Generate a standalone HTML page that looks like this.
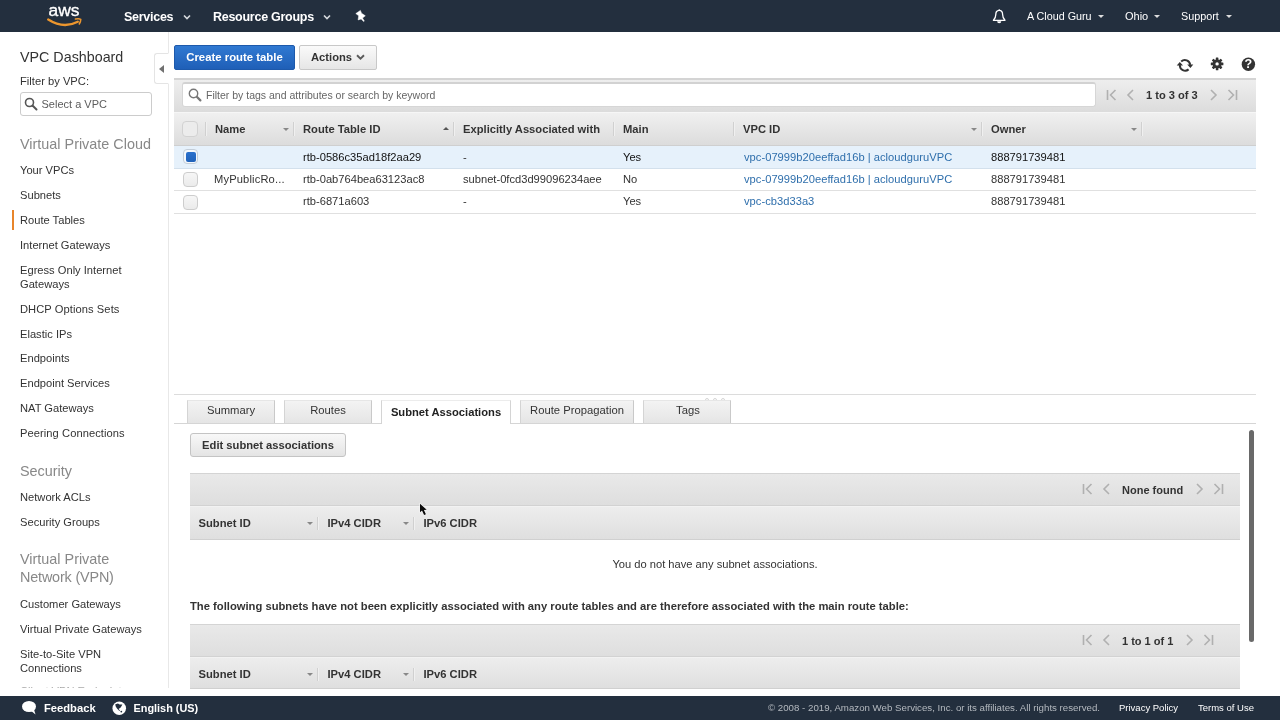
<!DOCTYPE html>
<html lang="en">
<head>
<meta charset="utf-8">
<title>Route Tables | VPC Management Console</title>
<style>
*{box-sizing:border-box;margin:0;padding:0}
html,body{width:1280px;height:720px;overflow:hidden;background:#fff;font-family:"Liberation Sans",Arial,sans-serif;color:#333;font-size:12px}
.abs{position:absolute}
#hdr{position:absolute;left:0;top:0;width:1280px;height:32px;background:#232f3e;color:#fff}
#hdr .t{position:absolute;top:9px;font-size:12.5px;letter-spacing:-0.27px;font-weight:bold;line-height:16px;white-space:nowrap}
#hdr .r{position:absolute;top:9px;font-size:11px;line-height:14px;white-space:nowrap;color:#fff}
#ftr{position:absolute;left:0;top:696px;width:1280px;height:24px;background:#232f3e;color:#fff}
#ftr span{position:absolute;white-space:nowrap}
#side{position:absolute;left:0;top:32px;width:169px;height:656px;background:#fff;border-right:1px solid #e8e8e8;overflow:hidden}
#side .h1{position:absolute;left:20px;font-size:14.3px;color:#333;line-height:18px;white-space:nowrap}
#side .h2{position:absolute;left:20px;font-size:14.4px;color:#888;line-height:18px}
#side .l{position:absolute;left:20px;font-size:11.15px;color:#333;line-height:14px;width:130px}
#main{position:absolute;left:169px;top:32px;width:1111px;height:664px;background:#fff;overflow:hidden}
.btn{position:absolute;height:25px;border-radius:2px;font-size:11.2px;font-weight:bold;line-height:23px;text-align:center;white-space:nowrap}
.bar{position:absolute;background:linear-gradient(#ededed,#e0e0e0);}
.th{position:absolute;font-weight:bold;font-size:11.2px;color:#333;white-space:nowrap;line-height:14px}
.td{position:absolute;font-size:11.15px;color:#333;white-space:nowrap;line-height:14px}
.lnk{color:#2f6fac;letter-spacing:0.03px}
.cb{position:absolute;width:15px;height:15px;border:1px solid #cdcdcd;border-radius:4px;background:linear-gradient(#f6f6f6,#ebebeb)}
.sep{position:absolute;width:1px;background:#d0d0d0;box-shadow:1px 0 0 #f0f0f0}
.tri{position:absolute;width:0;height:0;border-left:3px solid transparent;border-right:3px solid transparent;border-top:3px solid #888}
.tab{position:absolute;top:400px;height:23px;border:1px solid #d4d4d4;border-top-color:#e6e6e6;border-right-color:#c9c9c9;border-bottom:none;background:linear-gradient(#f3f3f3,#e5e5e5);font-size:11.25px;line-height:19px;text-align:center;color:#333}
.pg{position:absolute;font-size:11px;font-weight:bold;color:#333;white-space:nowrap;line-height:14px}
</style>
</head>
<body>
<div id="root" style="position:absolute;left:0;top:0;width:1280px;height:720px;overflow:hidden;will-change:transform">
<div id="hdr">
  <svg class="abs" style="left:44px;top:2px" width="44" height="28" viewBox="0 0 44 28">
    <text x="4.6" y="14.2" font-family="Liberation Sans, sans-serif" font-size="17.4" fill="#fff" textLength="31" lengthAdjust="spacingAndGlyphs" stroke="#fff" stroke-width="0.35">aws</text>
    <path d="M4.2 17.5 Q19.5 27.2 33.8 19.7" fill="none" stroke="#ec962e" stroke-width="2.3" stroke-linecap="round"/>
    <path d="M31.4 17 Q35 16.2 36.8 17.3 Q36.8 19.6 35.3 22" fill="none" stroke="#ec962e" stroke-width="1.5" stroke-linecap="round" stroke-linejoin="round"/>
  </svg>
  <span class="t" style="left:124px">Services</span>
  <svg class="abs" style="left:183px;top:14px" width="8" height="7" viewBox="0 0 8 7"><path d="M1 1.5 L4 4.6 L7 1.5" fill="none" stroke="#d5d9dd" stroke-width="1.6"/></svg>
  <span class="t" style="left:213px">Resource Groups</span>
  <svg class="abs" style="left:323px;top:14px" width="8" height="7" viewBox="0 0 8 7"><path d="M1 1.5 L4 4.6 L7 1.5" fill="none" stroke="#d5d9dd" stroke-width="1.6"/></svg>
  <svg class="abs" style="left:345px;top:4px" width="30" height="24" viewBox="0 0 30 24"><path d="M10.8 9.6 L15.4 6.4 L16.5 9.2 L20.3 11.8 L17.5 14.1 L19.3 17.1 L18.6 17.5 L16.2 15 L13.1 15.9 L13.7 11.7 Z" fill="#fff" stroke="#fff" stroke-width="0.5" stroke-linejoin="round"/></svg>
  <svg class="abs" style="left:984px;top:4px" width="30" height="24" viewBox="0 0 30 24"><path d="M15.2 6.3 C12.4 6.3 11.8 8.6 11.8 10.6 C11.8 13.6 10.8 15 9.4 16.3 L21 16.3 C19.6 15 18.6 13.6 18.6 10.6 C18.6 8.6 18 6.3 15.2 6.3 Z" fill="none" stroke="#fff" stroke-width="1.3" stroke-linejoin="round"/><path d="M13.1 17.2 A2.1 2.1 0 0 0 17.3 17.2 Z" fill="#fff"/><circle cx="15.2" cy="6" r="0.8" fill="#fff"/></svg>
  <span class="r" style="left:1027px;font-size:10.75px">A Cloud Guru</span>
  <div class="tri" style="left:1098px;top:15px;border-top-color:#ddd"></div>
  <span class="r" style="left:1125px">Ohio</span>
  <div class="tri" style="left:1154px;top:15px;border-top-color:#ddd"></div>
  <span class="r" style="left:1181px;font-size:10.8px">Support</span>
  <div class="tri" style="left:1226px;top:15px;border-top-color:#ddd"></div>
</div>

<div id="side">
  <div class="h1" style="top:16px">VPC Dashboard</div>
  <div class="l" style="top:42px;font-size:11.2px">Filter by VPC:</div>
  <div class="abs" style="left:20px;top:60px;width:132px;height:24px;border:1px solid #ccc;border-radius:3px;background:#fff"></div>
  <svg class="abs" style="left:24px;top:65px" width="14" height="14" viewBox="0 0 14 14"><circle cx="5.5" cy="5.5" r="4" fill="none" stroke="#555" stroke-width="1.6"/><path d="M8.5 8.5 L12.5 12.5" stroke="#555" stroke-width="2" stroke-linecap="round"/></svg>
  <div class="l" style="left:41.5px;top:65px;font-size:11px;color:#5c5c5c">Select a VPC</div>
  <div class="h2" style="top:103px">Virtual Private Cloud</div>
  <div class="l" style="top:131px">Your VPCs</div>
  <div class="l" style="top:156px">Subnets</div>
  <div class="abs" style="left:12px;top:178px;width:2px;height:20px;background:#e8852b"></div>
  <div class="l" style="top:181px">Route Tables</div>
  <div class="l" style="top:206px">Internet Gateways</div>
  <div class="l" style="top:231px">Egress Only Internet Gateways</div>
  <div class="l" style="top:270px;letter-spacing:0.07px">DHCP Options Sets</div>
  <div class="l" style="top:295px">Elastic IPs</div>
  <div class="l" style="top:319px">Endpoints</div>
  <div class="l" style="top:344px">Endpoint Services</div>
  <div class="l" style="top:369px">NAT Gateways</div>
  <div class="l" style="top:394px;letter-spacing:0.07px">Peering Connections</div>
  <div class="h2" style="top:430px">Security</div>
  <div class="l" style="top:458px">Network ACLs</div>
  <div class="l" style="top:483px">Security Groups</div>
  <div class="h2" style="top:518px;width:120px">Virtual Private <span style="letter-spacing:-0.17px">Network (VPN)</span></div>
  <div class="l" style="top:565px">Customer Gateways</div>
  <div class="l" style="top:590px">Virtual Private Gateways</div>
  <div class="l" style="top:615px;width:110px">Site-to-Site VPN Connections</div>
  <div class="l" style="top:652px;color:#aaa">Client VPN Endpoints</div>
</div>
<!-- collapse handle -->
<div class="abs" style="left:154px;top:53px;width:15px;height:31px;background:#fff;border:1px solid #e4e4e4;border-right:1px solid #fff;border-radius:3px 0 0 3px"></div>
<div class="abs" style="left:159px;top:65px;width:0;height:0;border-top:4.5px solid transparent;border-bottom:4.5px solid transparent;border-right:5px solid #707070"></div>

<div id="main">
  <!-- coordinates inside #main are page coords minus (169,32) -->
  <div class="btn" style="left:5px;top:13px;width:121px;font-size:11.35px;background:linear-gradient(#3079d2,#1f5fb7);border:1px solid #1d59ab;color:#fff">Create route table</div>
  <div class="btn" style="left:130px;top:13px;width:78px;background:linear-gradient(#fafafa,#e6e6e6);border:1px solid #c8c8c8;color:#333;text-align:left;padding-left:11px">Actions</div>
  <svg class="abs" style="left:187px;top:22px" width="9" height="7" viewBox="0 0 9 7"><path d="M1 1.2 L4.5 4.6 L8 1.2" fill="none" stroke="#5a5a5a" stroke-width="1.9"/></svg>

  <!-- right icons -->
  <svg class="abs" style="left:1007px;top:26px" width="18" height="14" viewBox="0 0 18 14"><g fill="none" stroke="#333" stroke-width="2"><path d="M5.2 3.4 A5.4 5.4 0 0 1 14.2 6.8"/><path d="M3.8 7.1 A5.4 5.4 0 0 0 12.6 11.4"/></g><path d="M11.2 6.5 L17.3 6.5 L14.4 10.1 Z M0.7 7.4 L7 7.4 L3.8 3.9 Z" fill="#333"/></svg>
  <svg class="abs" style="left:1041px;top:25px" width="14" height="14" viewBox="0 0 14 14"><g fill="#333" transform="translate(7.1 6.9)"><circle r="4.5"/><rect x="-1.3" y="-6.3" width="2.6" height="12.6" rx="0.5"/><rect x="-1.3" y="-6.3" width="2.6" height="12.6" rx="0.5" transform="rotate(45)"/><rect x="-1.3" y="-6.3" width="2.6" height="12.6" rx="0.5" transform="rotate(90)"/><rect x="-1.3" y="-6.3" width="2.6" height="12.6" rx="0.5" transform="rotate(135)"/><circle r="1.7" fill="#fff"/></g></svg>
  <svg class="abs" style="left:1072px;top:25px" width="15" height="15" viewBox="0 0 15 15"><circle cx="7.4" cy="7.3" r="6.7" fill="#333"/><text x="7.4" y="11.4" text-anchor="middle" font-family="Liberation Sans, sans-serif" font-weight="bold" font-size="12.5" fill="#fff">?</text></svg>

  <!-- filter bar -->
  <div class="bar" style="left:5px;top:46px;width:1082px;height:34px;background:linear-gradient(#eeeeee,#dcdcdc);border-top:2px solid #d4d4d4"></div>
  <div class="abs" style="left:13px;top:50px;width:914px;height:25px;background:#fff;border:1px solid #d6d6d6;border-top:2px solid #d2d2d2;border-radius:3px"></div>
  <svg class="abs" style="left:19px;top:56px" width="14" height="14" viewBox="0 0 14 14"><circle cx="5.5" cy="5.5" r="4.2" fill="none" stroke="#777" stroke-width="1.4"/><path d="M8.8 8.8 L12.4 12.4" stroke="#777" stroke-width="2.2" stroke-linecap="round"/></svg>
  <div class="td" style="left:37px;top:56px;color:#666;font-size:10.5px">Filter by tags and attributes or search by keyword</div>
  <svg class="abs" style="left:936.6px;top:57px" width="12" height="12" viewBox="0 0 12 12"><path d="M1.5 1 V11 M9.5 1 L4.5 6 L9.5 11" fill="none" stroke="#b0b0b0" stroke-width="1.6"/></svg>
  <svg class="abs" style="left:957px;top:57px" width="9" height="12" viewBox="0 0 9 12"><path d="M7 1 L2 6 L7 11" fill="none" stroke="#b0b0b0" stroke-width="1.6"/></svg>
  <div class="pg" style="left:977px;top:56px;font-size:11.1px">1 to 3 of 3</div>
  <svg class="abs" style="left:1040.3px;top:57px" width="9" height="12" viewBox="0 0 9 12"><path d="M2 1 L7 6 L2 11" fill="none" stroke="#b0b0b0" stroke-width="1.6"/></svg>
  <svg class="abs" style="left:1057.2px;top:57px" width="12" height="12" viewBox="0 0 12 12"><path d="M10.5 1 V11 M2.5 1 L7.5 6 L2.5 11" fill="none" stroke="#b0b0b0" stroke-width="1.6"/></svg>

  <!-- table header -->
  <div class="bar" style="left:5px;top:80px;width:1082px;height:34px;background:linear-gradient(#f0f0f0,#dcdcdc);border-top:1px solid #f6f6f6;border-bottom:1px solid #cfcfcf"></div>
  <div class="cb" style="left:13px;top:89px;width:16px;height:16px;background:#ececec;border-color:#d2d2d2"></div>
  <div class="sep" style="left:36px;top:90px;height:14px"></div>
  <div class="th" style="left:46px;top:90px">Name</div>
  <div class="tri" style="left:114px;top:96px"></div>
  <div class="sep" style="left:124px;top:90px;height:14px"></div>
  <div class="th" style="left:134px;top:90px">Route Table ID</div>
  <div class="tri" style="left:274px;top:95px;border-top:none;border-bottom:3px solid #555"></div>
  <div class="sep" style="left:284px;top:90px;height:14px"></div>
  <div class="th" style="left:294px;top:90px">Explicitly Associated with</div>
  <div class="sep" style="left:444px;top:90px;height:14px"></div>
  <div class="th" style="left:454px;top:90px">Main</div>
  <div class="sep" style="left:564px;top:90px;height:14px"></div>
  <div class="th" style="left:574px;top:90px">VPC ID</div>
  <div class="tri" style="left:802px;top:96px"></div>
  <div class="sep" style="left:812px;top:90px;height:14px"></div>
  <div class="th" style="left:822px;top:90px">Owner</div>
  <div class="tri" style="left:962px;top:96px"></div>
  <div class="sep" style="left:972px;top:90px;height:14px"></div>

  <!-- rows -->
  <div class="abs" style="left:5px;top:114px;width:1082px;height:23px;background:#e6f1fb;border-bottom:1px solid #d3e0ec"></div>
  <div class="abs" style="left:5px;top:137px;width:1082px;height:22px;border-bottom:1px solid #e0e0e0"></div>
  <div class="abs" style="left:5px;top:159px;width:1082px;height:23px;border-bottom:1px solid #e0e0e0"></div>

  <div class="cb" style="left:14px;top:117px;background:#f4f8fc;border-color:#c3cdd8"></div>
  <div class="abs" style="left:17px;top:120px;width:10px;height:10px;background:linear-gradient(#2a70cc,#2062ba);border-radius:2px"></div>
  <div class="td" style="left:134px;top:118px;color:#111">rtb-0586c35ad18f2aa29</div>
  <div class="td" style="left:294px;top:118px">-</div>
  <div class="td" style="left:454px;top:118px;color:#111">Yes</div>
  <div class="td lnk" style="left:575px;top:118px">vpc-07999b20eeffad16b | acloudguruVPC</div>
  <div class="td" style="left:822px;top:118px;color:#111">888791739481</div>

  <div class="cb" style="left:14px;top:140px"></div>
  <div class="td" style="left:45px;top:140px;letter-spacing:0.15px">MyPublicRo...</div>
  <div class="td" style="left:134px;top:140px">rtb-0ab764bea63123ac8</div>
  <div class="td" style="left:294px;top:140px">subnet-0fcd3d99096234aee</div>
  <div class="td" style="left:454px;top:140px">No</div>
  <div class="td lnk" style="left:575px;top:140px">vpc-07999b20eeffad16b | acloudguruVPC</div>
  <div class="td" style="left:822px;top:140px">888791739481</div>

  <div class="cb" style="left:14px;top:163px"></div>
  <div class="td" style="left:134px;top:162px">rtb-6871a603</div>
  <div class="td" style="left:294px;top:162px">-</div>
  <div class="td" style="left:454px;top:162px">Yes</div>
  <div class="td lnk" style="left:575px;top:162px">vpc-cb3d33a3</div>
  <div class="td" style="left:822px;top:162px">888791739481</div>

  <!-- splitter -->
  <div class="abs" style="left:5px;top:362px;width:1082px;height:1px;background:#dcdcdc"></div>
  <div class="abs" style="left:536px;top:366px;width:4px;height:4px;border:1px solid #d4d4d4;border-radius:2px"></div><div class="abs" style="left:544px;top:366px;width:4px;height:4px;border:1px solid #d4d4d4;border-radius:2px"></div><div class="abs" style="left:552px;top:366px;width:4px;height:4px;border:1px solid #d4d4d4;border-radius:2px"></div>

  <!-- tabs (page y 400-423) -->
  <div class="abs" style="left:5px;top:391px;width:1082px;height:1px;background:#d5d5d5"></div>
  <div class="tab" style="left:18px;top:368px;width:88px">Summary</div>
  <div class="tab" style="left:115px;top:368px;width:88px">Routes</div>
  <div class="tab" style="left:212px;top:368px;width:130px;height:24px;background:#fff;font-weight:bold;font-size:11.2px;line-height:23px;color:#222;border-color:#d4d4d4;border-top-color:#ececec">Subnet Associations</div>
  <div class="tab" style="left:351px;top:368px;width:114px">Route Propagation</div>
  <div class="tab" style="left:474px;top:368px;width:88px;padding-left:2px">Tags</div>

  <!-- edit button -->
  <div class="btn" style="left:21px;top:401px;width:156px;height:24px;line-height:22px;background:linear-gradient(#f8f8f8,#e4e4e4);border:1px solid #c4c4c4;color:#333;border-radius:3px">Edit subnet associations</div>

  <!-- inner table 1 -->
  <div class="bar" style="left:21px;top:441px;width:1050px;height:33px;background:linear-gradient(#e9e9e9,#dedede);border-top:1px solid #d4d4d4;border-bottom:1px solid #d2d2d2"></div>
  <svg class="abs" style="left:913px;top:451px" width="12" height="12" viewBox="0 0 12 12"><path d="M1.5 1 V11 M9.5 1 L4.5 6 L9.5 11" fill="none" stroke="#b0b0b0" stroke-width="1.6"/></svg>
  <svg class="abs" style="left:933px;top:451px" width="9" height="12" viewBox="0 0 9 12"><path d="M7 1 L2 6 L7 11" fill="none" stroke="#b0b0b0" stroke-width="1.6"/></svg>
  <div class="pg" style="left:953px;top:451px">None found</div>
  <svg class="abs" style="left:1026px;top:451px" width="9" height="12" viewBox="0 0 9 12"><path d="M2 1 L7 6 L2 11" fill="none" stroke="#b0b0b0" stroke-width="1.6"/></svg>
  <svg class="abs" style="left:1042.5px;top:451px" width="12" height="12" viewBox="0 0 12 12"><path d="M10.5 1 V11 M2.5 1 L7.5 6 L2.5 11" fill="none" stroke="#b0b0b0" stroke-width="1.6"/></svg>
  <div class="bar" style="left:21px;top:474px;width:1050px;height:34px;background:linear-gradient(#ededed,#dfdfdf);border-top:1px solid #f2f2f2;border-bottom:1px solid #d0d0d0"></div>
  <div class="th" style="left:29.5px;top:484px">Subnet ID</div>
  <div class="tri" style="left:138px;top:490px"></div>
  <div class="sep" style="left:148px;top:485px;height:13px"></div>
  <div class="th" style="left:158.5px;top:484px">IPv4 CIDR</div>
  <div class="tri" style="left:234px;top:490px"></div>
  <div class="sep" style="left:244px;top:485px;height:13px"></div>
  <div class="th" style="left:254.5px;top:484px">IPv6 CIDR</div>

  <div class="td" style="left:21px;width:1050px;text-align:center;top:525px">You do not have any subnet associations.</div>
  <div class="th" style="left:21px;top:567px;font-size:11.23px">The following subnets have not been explicitly associated with any route tables and are therefore associated with the main route table:</div>

  <!-- inner table 2 -->
  <div class="bar" style="left:21px;top:592px;width:1050px;height:33px;background:linear-gradient(#e9e9e9,#dedede);border-top:1px solid #d4d4d4;border-bottom:1px solid #d2d2d2"></div>
  <svg class="abs" style="left:913px;top:602px" width="12" height="12" viewBox="0 0 12 12"><path d="M1.5 1 V11 M9.5 1 L4.5 6 L9.5 11" fill="none" stroke="#b0b0b0" stroke-width="1.6"/></svg>
  <svg class="abs" style="left:933px;top:602px" width="9" height="12" viewBox="0 0 9 12"><path d="M7 1 L2 6 L7 11" fill="none" stroke="#b0b0b0" stroke-width="1.6"/></svg>
  <div class="pg" style="left:953px;top:602px">1 to 1 of 1</div>
  <svg class="abs" style="left:1016px;top:602px" width="9" height="12" viewBox="0 0 9 12"><path d="M2 1 L7 6 L2 11" fill="none" stroke="#b0b0b0" stroke-width="1.6"/></svg>
  <svg class="abs" style="left:1032.7px;top:602px" width="12" height="12" viewBox="0 0 12 12"><path d="M10.5 1 V11 M2.5 1 L7.5 6 L2.5 11" fill="none" stroke="#b0b0b0" stroke-width="1.6"/></svg>
  <div class="bar" style="left:21px;top:625px;width:1050px;height:32px;background:linear-gradient(#ededed,#dfdfdf);border-top:1px solid #f2f2f2;border-bottom:1px solid #d0d0d0"></div>
  <div class="th" style="left:29.5px;top:635px">Subnet ID</div>
  <div class="tri" style="left:138px;top:641px"></div>
  <div class="sep" style="left:148px;top:636px;height:13px"></div>
  <div class="th" style="left:158.5px;top:635px">IPv4 CIDR</div>
  <div class="tri" style="left:234px;top:641px"></div>
  <div class="sep" style="left:244px;top:636px;height:13px"></div>
  <div class="th" style="left:254.5px;top:635px">IPv6 CIDR</div>

  <!-- scrollbar -->
  <div class="abs" style="left:1080px;top:398px;width:5px;height:212px;border-radius:2.5px;background:#696969"></div>

  <!-- mouse cursor -->
  <svg class="abs" style="left:249px;top:470px" width="11" height="15" viewBox="0 0 11 15"><path d="M2 1.7 L2 10.2 L4 8.6 L6.1 13 L7.9 12.2 L5.9 8 L8.7 7.7 Z" fill="#0a0a0a" stroke="#f4f4f4" stroke-width="1.2" stroke-linejoin="round" style="paint-order:stroke"/></svg>
</div>

<div id="ftr">
  <svg class="abs" style="left:21px;top:4px" width="17" height="16" viewBox="0 0 17 16"><ellipse cx="8" cy="6.5" rx="7" ry="5.5" fill="#fff"/><path d="M9 10 L14.5 14.5 L12.5 8 Z" fill="#fff"/></svg>
  <span style="left:44px;top:5px;font-size:11.2px;font-weight:bold;line-height:14px">Feedback</span>
  <svg class="abs" style="left:112px;top:5px" width="15" height="15" viewBox="0 0 15 15"><circle cx="7.25" cy="7.2" r="6.8" fill="#fff"/><path d="M3.3 3.2 L6 2.4 L7.5 3.5 L10.4 3.4 L8.7 6.4 L6.6 7.9 L8 9.6 L7.4 9.9 L5 7.6 L3.6 5.2 Z" fill="#232f3e"/><circle cx="9.3" cy="10.6" r="0.9" fill="#232f3e"/></svg>
  <span style="left:133.5px;top:5px;font-size:10.9px;font-weight:bold;line-height:14px">English (US)</span>
  <span style="left:768px;top:6px;font-size:9.7px;line-height:12px;color:#b4b9bf">© 2008 - 2019, Amazon Web Services, Inc. or its affiliates. All rights reserved.</span>
  <span style="left:1119px;top:6px;font-size:9.5px;line-height:12px">Privacy Policy</span>
  <span style="left:1198px;top:6px;font-size:9.5px;line-height:12px">Terms of Use</span>
</div>
</div>
</body>
</html>
